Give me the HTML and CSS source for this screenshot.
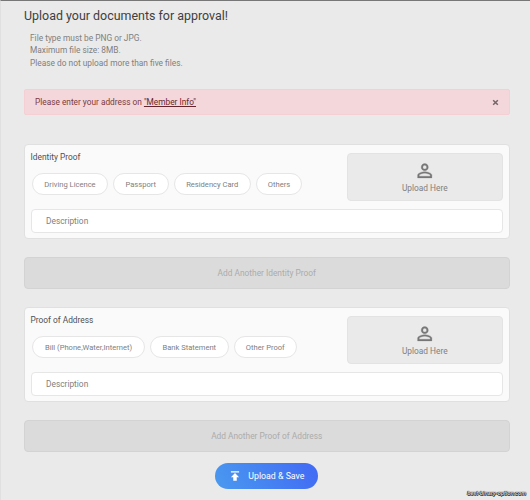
FILE: index.html
```html
<!DOCTYPE html>
<html lang="en">
<head>
<meta charset="utf-8">
<title>Upload documents</title>
<link rel="stylesheet" href="styles.css">
</head>
<body>
<main class="page">
  <h1 class="title">Upload your documents for approval!</h1>
  <div class="rules">
    <p>File type must be PNG or JPG.</p>
    <p>Maximum file size: 8MB.</p>
    <p>Please do not upload more than five files.</p>
  </div>
  <div class="alert">
    <span>Please enter your address on <a class="alert-link">"Member Info"</a></span>
    <svg class="close" viewBox="0 0 6 6"><path d="M1 1l4 4M5 1L1 5"/></svg>
  </div>

  <section class="card">
    <div class="card-top">
      <div class="card-main">
        <h2 class="card-title">Identity Proof</h2>
        <div class="chips">
          <span class="chip driving">Driving Licence</span>
          <span class="chip passport">Passport</span>
          <span class="chip residency">Residency Card</span>
          <span class="chip others">Others</span>
        </div>
      </div>
      <div class="drop">
        <svg class="person" viewBox="0 0 24 24"><path d="M12 5.9a2.1 2.1 0 1 1 0 4.2 2.1 2.1 0 0 1 0-4.2m0 9c2.97 0 6.1 1.46 6.1 2.1v1.1H5.9V17c0-.64 3.13-2.1 6.1-2.1M12 4C9.79 4 8 5.79 8 8s1.79 4 4 4 4-1.79 4-4-1.79-4-4-4zm0 9c-2.67 0-8 1.34-8 4v3h16v-3c0-2.66-5.33-4-8-4z"/></svg>
        <span>Upload Here</span>
      </div>
    </div>
    <div class="field">Description</div>
  </section>
  <div class="add">Add Another Identity Proof</div>

  <section class="card">
    <div class="card-top">
      <div class="card-main">
        <h2 class="card-title">Proof of Address</h2>
        <div class="chips">
          <span class="chip bill">Bill (Phone,Water,Internet)</span>
          <span class="chip bank">Bank Statement</span>
          <span class="chip other">Other Proof</span>
        </div>
      </div>
      <div class="drop">
        <svg class="person" viewBox="0 0 24 24"><path d="M12 5.9a2.1 2.1 0 1 1 0 4.2 2.1 2.1 0 0 1 0-4.2m0 9c2.97 0 6.1 1.46 6.1 2.1v1.1H5.9V17c0-.64 3.13-2.1 6.1-2.1M12 4C9.79 4 8 5.79 8 8s1.79 4 4 4 4-1.79 4-4-1.79-4-4-4zm0 9c-2.67 0-8 1.34-8 4v3h16v-3c0-2.66-5.33-4-8-4z"/></svg>
        <span>Upload Here</span>
      </div>
    </div>
    <div class="field">Description</div>
  </section>
  <div class="add">Add Another Proof of Address</div>

  <div class="save">
    <svg class="publish" viewBox="0 0 24 24"><path d="M5 4v2h14V4H5zm0 10h4v6h6v-6h4l-7-7-7 7z"/></svg>
    <span>Upload &amp; Save</span>
  </div>
  <div class="watermark">best-binary-option.com</div>
</main>
</body>
</html>
```
FILE: styles.css
```css
* { box-sizing: border-box; }

body {
  margin: 0;
  background: #eaeaea;
  font-family: Roboto, "Liberation Sans", sans-serif;
  font-size: 8.35px;
  color: #808080;
}

.page {
  position: relative;
  height: 500px;
  overflow: hidden;
  padding: 7px 20.5px 0 23px;
  border-top: 1px solid #777;
  border-left: 1px solid #e0e0e0;
}

h1, h2, p { margin: 0; font-weight: 400; }

.title {
  font-size: 12.45px;
  line-height: 15px;
  color: #404040;
}

.rules {
  margin-top: 9px;
  padding-left: 6px;
  line-height: 12.4px;
}

.alert {
  display: flex;
  align-items: center;
  justify-content: space-between;
  height: 26px;
  margin-top: 19.8px;
  padding: 0 10px;
  border: 1px solid #f4d0d5;
  border-radius: 2px;
  background: #f3d7da;
  color: #7b3a42;
  font-size: 8.3px;
}

.alert-link { text-decoration: underline; color: #64262e; }

.close {
  width: 7px;
  height: 7px;
  fill: none;
  stroke: #75656a;
  stroke-width: 1.3;
}

.card {
  height: 95px;
  margin-top: 29px;
  padding: 8px 5.5px 0;
  border: 1px solid #e0e0e0;
  border-radius: 4px;
  background: #fafafa;
}

.add + .card { margin-top: 18px; }

.card-top {
  display: flex;
  justify-content: space-between;
}

.card-title {
  margin-top: -2px;
  font-size: 8.35px;
  line-height: 12px;
  color: #505050;
}

.chips {
  display: flex;
  gap: 5px;
  margin: 10px 0 0 1.5px;
}

.chip {
  display: flex;
  align-items: center;
  justify-content: center;
  height: 22px;
  border: 1px solid #e6e6e6;
  border-radius: 11px;
  background: #fff;
  font-size: 7.58px;
  white-space: nowrap;
}

.driving { width: 76px; }
.passport { width: 55.5px; }
.residency { width: 77.5px; }
.others { width: 46px; }
.bill { width: 113px; }
.bank { width: 78.5px; }
.other { width: 63.5px; }

.drop {
  display: flex;
  flex-direction: column;
  align-items: center;
  width: 156.5px;
  height: 48px;
  padding-top: 6px;
  border: 1px solid #e3e3e3;
  border-radius: 4px;
  background: #eaeaea;
  line-height: 12px;
}

.person {
  width: 21.5px;
  height: 21.5px;
  fill: #777;
  stroke: #777;
  stroke-width: 0.3;
}

.field {
  height: 24px;
  margin-top: 8px;
  padding-left: 14.5px;
  border: 1px solid #e6e6e6;
  border-radius: 4px;
  background: #fff;
  line-height: 22px;
}

.add {
  height: 32px;
  margin-top: 18px;
  border: 1px solid #d3d3d3;
  border-radius: 4px;
  background: #dbdbdb;
  color: #ababab;
  text-align: center;
  line-height: 30px;
}

.save {
  display: flex;
  align-items: center;
  width: 103px;
  height: 26px;
  margin: 11px auto 0;
  padding-left: 13px;
  border-radius: 13px;
  background: linear-gradient(60deg, #4a9aef, #4169f5);
  color: #fff;
  font-size: 8.8px;
}

.publish {
  width: 14px;
  height: 14px;
  margin-right: 6px;
  fill: #fff;
}

.watermark {
  position: absolute;
  right: 4px;
  bottom: 2px;
  font: italic bold 5.3px/9px "Liberation Sans", sans-serif;
  color: #ddd;
  text-shadow: 0 0 1px #222, 0 0 1px #222, 0.5px 0.5px 0 #222, -0.5px -0.5px 0 #222;
}
```
